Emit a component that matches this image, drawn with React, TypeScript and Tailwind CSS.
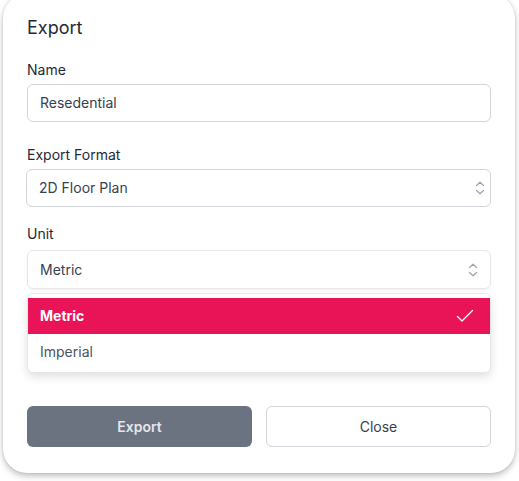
import React from "react";

function UpDown({ className = "" }: { className?: string }) {
  return (
    <svg className={className} width="10" height="14" viewBox="0 0 10 14" fill="none" stroke="#9ca3af" strokeWidth="1.2" strokeLinecap="round" strokeLinejoin="round">
      <path d="M1.5 4.5 L5 1.2 L8.5 4.5" />
      <path d="M1.5 9.5 L5 12.8 L8.5 9.5" />
    </svg>
  );
}

export default function App() {
  return (
    <div className="w-[519px] h-[481px] bg-white overflow-hidden" style={{ fontFamily: "Inter, 'Noto Sans', sans-serif" }}>
      <div className="ml-[3px] -mt-[6px] w-[512px] h-[479px] rounded-[24px] bg-white shadow-[0_3px_6px_rgba(0,0,0,0.25),0_0_2px_rgba(0,0,0,0.12)] px-6 pt-5">
        <h1 className="text-[18px] leading-7 text-[#1f2937]">Export</h1>

        <div className="mt-[18px] text-sm leading-5 text-[#1f2937]">Name</div>
        <div className="mt-1 h-[38px] rounded-md border border-[#d1d5db] flex items-center px-3 text-sm text-[#374151]">
          Resedential
        </div>

        <div className="mt-[23px] text-sm leading-5 text-[#1f2937]">Export Format</div>
        <div className="mt-1 -ml-px h-[38px] rounded-md border border-[#d1d5db] flex items-center justify-between pl-3 pr-[4px] text-sm text-[#374151]">
          <span>2D Floor Plan</span>
          <UpDown className="mr-[1px]" />
        </div>

        <div className="mt-[17px] text-sm leading-5 text-[#1f2937]">Unit</div>
        <div className="mt-[6px] h-[39px] rounded-md border border-[#e5e7eb] shadow-[0_1px_2px_rgba(0,0,0,0.05)] flex items-center justify-between pl-3 pr-[12px] text-sm text-[#374151]">
          <span>Metric</span>
          <UpDown />
        </div>

        <div className="mt-1 rounded-md border border-[#e5e7eb] bg-white pt-1 pb-[2px] shadow-[0_4px_10px_rgba(0,0,0,0.12)]">
          <div className="h-9 bg-[#e91357] flex items-center justify-between pl-3 pr-4 text-sm font-bold text-white">
            <span>Metric</span>
            <svg width="18" height="14" viewBox="0 0 18 14" fill="none" stroke="white" strokeWidth="1.3" strokeLinecap="round" strokeLinejoin="round">
              <path d="M1.5 7.5 L6 12 L16.5 1.5" />
            </svg>
          </div>
          <div className="h-9 flex items-center pl-3 text-sm text-[#4b5563]">Imperial</div>
        </div>

        <div className="mt-[33px] grid grid-cols-2 gap-[14px]">
          <button className="h-[41px] rounded-md bg-[#6b7280] text-sm font-semibold text-[#e5e7eb]">Export</button>
          <button className="h-[41px] rounded-md border border-[#d1d5db] bg-white text-sm font-normal text-[#374151]">Close</button>
        </div>
      </div>
    </div>
  );
}
